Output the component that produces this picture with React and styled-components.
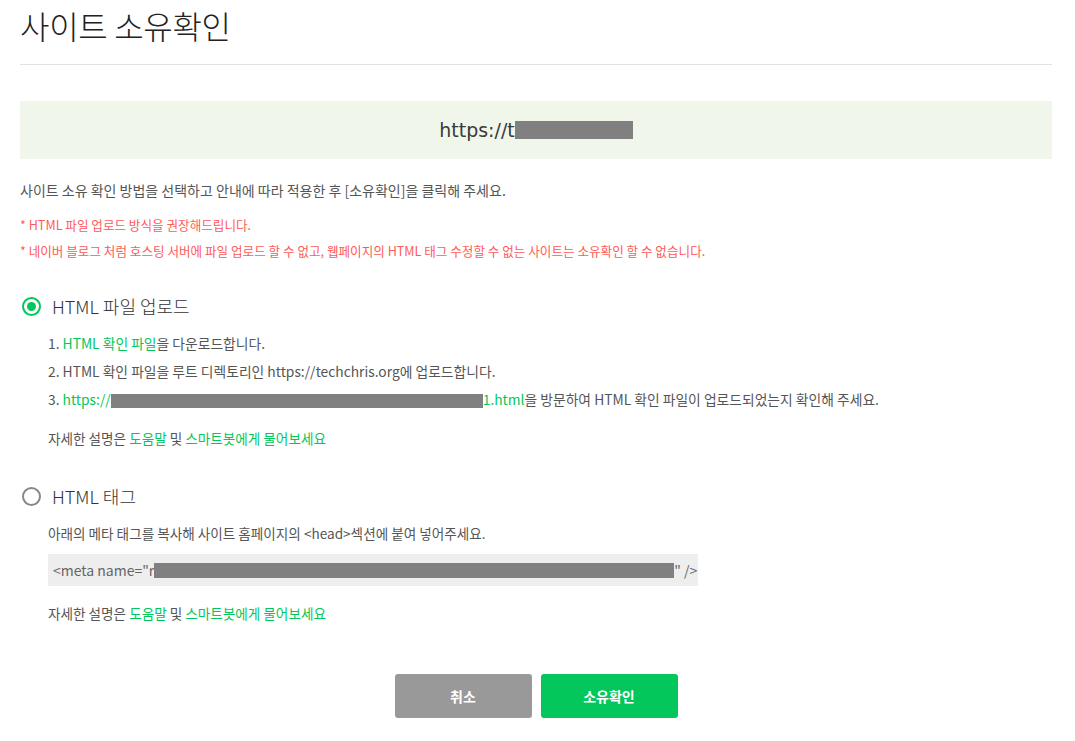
import React from "react";
import styled, { createGlobalStyle } from "styled-components";

const Global = createGlobalStyle`
  html, body { margin: 0; padding: 0; background: #fff; }
  body { font-family: "Noto Sans CJK KR", "Noto Sans", sans-serif; color: #333; }
  * { box-sizing: border-box; }
`;

const Page = styled.div`
  width: 1075px;
  padding: 0 23px 0 20px;
`;

const Title = styled.h1`
  margin: 0;
  padding-top: 3px;
  font-size: 32px;
  line-height: 44px;
  font-weight: 300;
  color: #222;
  letter-spacing: -0.3px;
  height: 65px;
  border-bottom: 1px solid #e2e2e2;
`;

const UrlBox = styled.div`
  margin-top: 36px;
  height: 58px;
  background: #f0f7ea;
  display: flex;
  align-items: center;
  justify-content: center;
  font-size: 19px;
  color: #3a3a3a;
  font-family: "DejaVu Sans", "Noto Sans", sans-serif;
  font-weight: 400;
`;

const Redact = styled.span`
  display: inline-block;
  background: #808080;
  width: ${p => p.w}px;
  height: ${p => p.h}px;
  vertical-align: middle;
`;

const Intro = styled.p`
  margin: 22px 0 0;
  font-size: 14px;
  line-height: 18px;
  color: #555;
`;

const Notes = styled.div`
  margin-top: 17px;
  display: flex;
  flex-direction: column;
  gap: 8px;
`;

const Note = styled.div`
  font-size: 12.6px;
  line-height: 18px;
  color: #ff5a5a;
`;

const Option = styled.section`
  margin-top: ${p => p.mt}px;
`;

const OptionHead = styled.label`
  display: flex;
  align-items: center;
  gap: 11px;
  padding-left: 2px;
  font-size: 18px;
  line-height: 24px;
  font-weight: 300;
  color: #333;
`;

const Radio = styled.span`
  width: 19px;
  height: 19px;
  border-radius: 50%;
  border: 2px solid ${p => (p.checked ? "#03c75a" : "#888")};
  display: flex;
  align-items: center;
  justify-content: center;
  &::after {
    content: "";
    width: 9px;
    height: 9px;
    border-radius: 50%;
    background: ${p => (p.checked ? "#03c75a" : "transparent")};
  }
`;

const Body = styled.div`
  padding-left: 28px;
`;

const Steps = styled.ol`
  list-style: none;
  margin: 16px 0 0;
  padding: 0;
  display: flex;
  flex-direction: column;
  gap: 10px;
`;

const Step = styled.li`
  font-size: 13.8px;
  line-height: 18px;
  color: #555;
  white-space: nowrap;
`;

const G = styled.span`
  color: #03c75a;
`;

const Help = styled.p`
  margin: ${p => p.mt}px 0 0;
  font-size: 13.6px;
  line-height: 18px;
  color: #555;
`;

const Desc = styled.p`
  margin: 16px 0 0;
  font-size: 13.6px;
  line-height: 18px;
  color: #555;
`;

const MetaBox = styled.div`
  margin-top: 12px;
  width: 650px;
  height: 32px;
  background: #eeeeee;
  display: flex;
  align-items: center;
  padding-left: 5px;
  font-size: 14px;
  color: #666;
  white-space: nowrap;
`;

const Buttons = styled.div`
  margin-top: 52px;
  display: flex;
  justify-content: center;
  gap: 9px;
`;

const Button = styled.button`
  width: 137px;
  height: 44px;
  border: none;
  border-radius: 3px;
  background: ${p => (p.primary ? "#03c75a" : "#999999")};
  color: #fff;
  font-family: inherit;
  font-size: 14px;
  font-weight: 700;
  cursor: pointer;
`;

export default function App() {
  return (
    <>
      <Global />
      <Page>
        <Title>사이트 소유확인</Title>
        <UrlBox>
          https://t<Redact w={118} h={18} />
        </UrlBox>
        <Intro>사이트 소유 확인 방법을 선택하고 안내에 따라 적용한 후 [소유확인]을 클릭해 주세요.</Intro>
        <Notes>
          <Note>* HTML 파일 업로드 방식을 권장해드립니다.</Note>
          <Note>* 네이버 블로그 처럼 호스팅 서버에 파일 업로드 할 수 없고, 웹페이지의 HTML 태그 수정할 수 없는 사이트는 소유확인 할 수 없습니다.</Note>
        </Notes>

        <Option mt={34}>
          <OptionHead>
            <Radio checked />
            HTML 파일 업로드
          </OptionHead>
          <Body>
            <Steps>
              <Step>1. <G>HTML 확인 파일</G>을 다운로드합니다.</Step>
              <Step>2. HTML 확인 파일을 루트 디렉토리인 https://techchris.org에 업로드합니다.</Step>
              <Step>
                3. <G>https://<Redact w={372} h={14} />1.html</G>을 방문하여 HTML 확인 파일이 업로드되었는지 확인해 주세요.
              </Step>
            </Steps>
            <Help mt={21}>
              자세한 설명은 <G>도움말</G> 및 <G>스마트봇에게 물어보세요</G>
            </Help>
          </Body>
        </Option>

        <Option mt={37}>
          <OptionHead>
            <Radio />
            HTML 태그
          </OptionHead>
          <Body>
            <Desc>아래의 메타 태그를 복사해 사이트 홈페이지의 &lt;head&gt;섹션에 붙여 넣어주세요.</Desc>
            <MetaBox>
              &lt;meta name="r<Redact w={520} h={15} />" /&gt;
            </MetaBox>
            <Help mt={18}>
              자세한 설명은 <G>도움말</G> 및 <G>스마트봇에게 물어보세요</G>
            </Help>
          </Body>
        </Option>

        <Buttons>
          <Button>취소</Button>
          <Button primary>소유확인</Button>
        </Buttons>
      </Page>
    </>
  );
}
